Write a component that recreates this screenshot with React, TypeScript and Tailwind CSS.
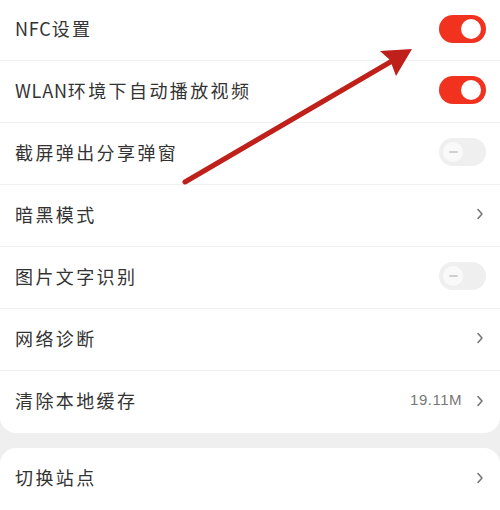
import React from 'react';

type Row = {
  label: string;
  kind: 'on' | 'off' | 'link';
  value?: string;
};

const rows: Row[] = [
  { label: 'NFC设置', kind: 'on' },
  { label: 'WLAN环境下自动播放视频', kind: 'on' },
  { label: '截屏弹出分享弹窗', kind: 'off' },
  { label: '暗黑模式', kind: 'link' },
  { label: '图片文字识别', kind: 'off' },
  { label: '网络诊断', kind: 'link' },
  { label: '清除本地缓存', kind: 'link', value: '19.11M' },
];

const font = { fontFamily: '"Noto Sans CJK SC", "Noto Sans", sans-serif' };

function Toggle({ on }: { on: boolean }) {
  if (on) {
    return (
      <div className="flex h-[28px] w-[47px] items-center justify-end rounded-full bg-[#f0321e] pr-[5px]">
        <div className="h-[20px] w-[20px] rounded-full bg-white" />
      </div>
    );
  }
  return (
    <div className="flex h-[28px] w-[47px] items-center rounded-full bg-[#efefef] pl-[4px]">
      <div className="flex h-[20px] w-[20px] items-center justify-center rounded-full bg-[#f9f9f9]">
        <div className="h-[2px] w-[9px] rounded bg-[#cfcfcf]" />
      </div>
    </div>
  );
}

function Chevron() {
  return (
    <svg width="8" height="12" viewBox="0 0 8 12" className="ml-[14px]">
      <path d="M2 1.5 L6 6 L2 10.5" fill="none" stroke="#777" strokeWidth="1.6" strokeLinecap="round" strokeLinejoin="round" />
    </svg>
  );
}

// latin runs get tighter spacing than the CJK characters
function Label({ text }: { text: string }) {
  const parts = text.match(/[A-Za-z0-9]+|[^A-Za-z0-9]+/g) ?? [];
  return (
    <span className="text-[18px] text-[#333]">
      {parts.map((p, i) =>
        /^[A-Za-z0-9]+$/.test(p) ? (
          <span key={i} className="tracking-[0.8px]">{p}</span>
        ) : (
          <span key={i} className="tracking-[2.4px]">{p}</span>
        )
      )}
    </span>
  );
}

function SettingRow({ row, last, first }: { row: Row; last: boolean; first?: boolean }) {
  return (
    <div
      className={`flex items-center justify-between pb-[3px] pl-[15px] pr-[14px] ${
        first ? 'h-[61px]' : 'h-[62px]'
      } ${last ? '' : 'border-b border-[#f1f1f1]'}`}
    >
      <Label text={row.label} />
      {row.kind === 'link' ? (
        <div className="flex items-center pr-[2px]">
          {row.value && (
            <span
              className="text-[15px] tracking-[0.5px] text-[#777]"
              style={{ fontFamily: '"Liberation Sans Narrow", "Liberation Sans", sans-serif' }}
            >
              {row.value}
            </span>
          )}
          <Chevron />
        </div>
      ) : (
        <Toggle on={row.kind === 'on'} />
      )}
    </div>
  );
}

export default function App() {
  return (
    <div className="relative h-[510px] w-[500px] overflow-hidden bg-[#efefef]" style={font}>
      <div className="rounded-b-[16px] bg-white">
        {rows.map((row, i) => (
          <SettingRow key={row.label} row={row} first={i === 0} last={i === rows.length - 1} />
        ))}
      </div>

      <div className="mt-[15px] rounded-t-[16px] bg-white">
        <SettingRow row={{ label: '切换站点', kind: 'link' }} last />
      </div>

      {/* annotation arrow */}
      <svg className="pointer-events-none absolute left-0 top-0" width="500" height="510">
        <line x1="185" y1="182" x2="404" y2="54" stroke="#c0201a" strokeWidth="5" strokeLinecap="round" />
        <polygon points="412,49 380,51 390,60 396,76" fill="#c0201a" />
      </svg>
    </div>
  );
}
